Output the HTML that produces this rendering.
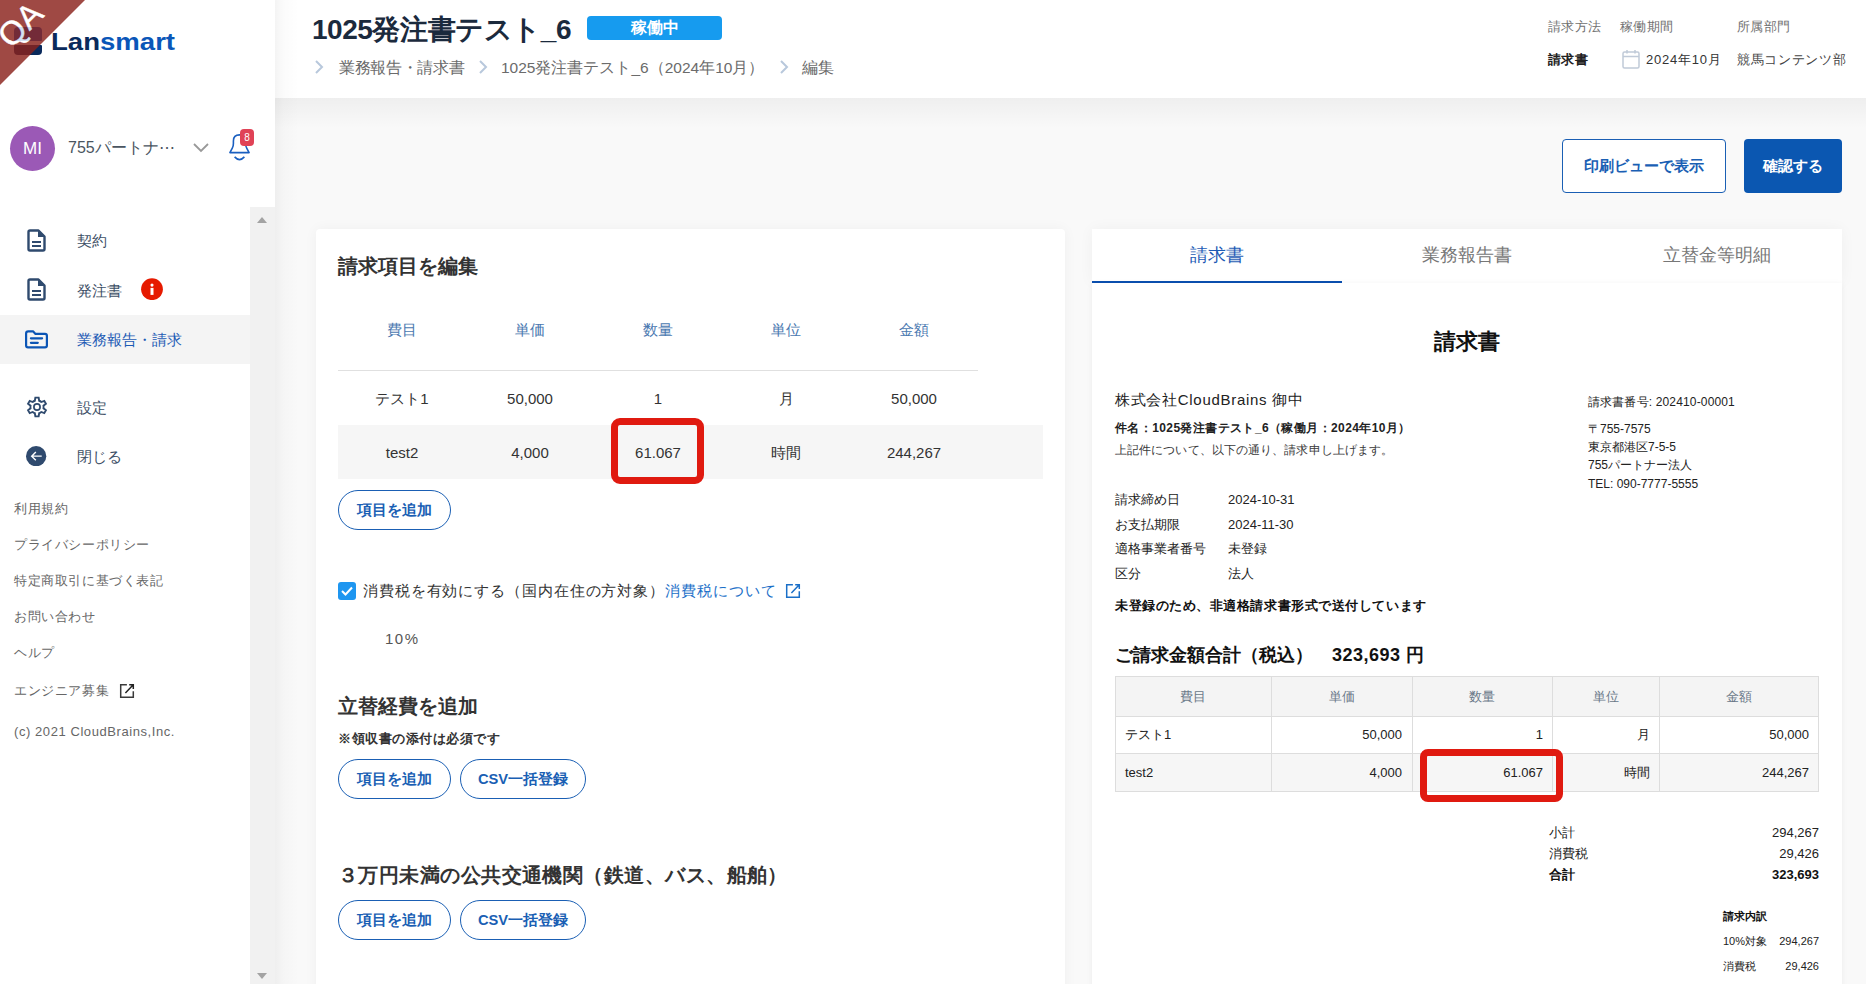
<!DOCTYPE html>
<html><head><meta charset="utf-8">
<style>
*{box-sizing:border-box;margin:0;padding:0}
html,body{width:1866px;height:984px;overflow:hidden;background:#f9f9f9;font-family:"Liberation Sans",sans-serif;color:#333}
.a{position:absolute;white-space:nowrap}
#side{position:absolute;left:0;top:0;width:275px;height:984px;background:#fff;z-index:2}
#sshadow{position:absolute;left:275px;top:0;width:24px;height:984px;background:linear-gradient(90deg,rgba(0,0,0,.045),rgba(0,0,0,.015) 35%,rgba(0,0,0,0));z-index:2}
#hshadow{position:absolute;left:275px;top:98px;width:1591px;height:30px;background:linear-gradient(rgba(0,0,0,.045),rgba(0,0,0,0))}
#hdr{position:absolute;left:275px;top:0;width:1591px;height:98px;background:#fff}
.navt{font-size:15px;color:#3d4f66;line-height:20px}
.foot{font-size:13px;color:#666;line-height:18px;left:14px;margin-top:1px;letter-spacing:.6px}
.btn-o{position:absolute;border:1px solid #1a5fb4;border-radius:20px;background:#fff;color:#1a5fb4;font-weight:bold;font-size:14.7px;text-align:center;line-height:39.5px;height:40px}
.th{font-size:15px;color:#4a78b0;line-height:20px;text-align:center;width:128px}
.td{font-size:15px;color:#333;line-height:20px;text-align:center;width:128px}
.doc{font-size:12px;color:#222;line-height:16px}
.dt{position:absolute;border-collapse:collapse;font-size:13px;color:#333}
</style></head><body>

<!-- SIDEBAR -->
<div id="side">
  <!-- logo -->
  <div class="a" style="left:14px;top:27px;width:28px;height:13.5px;border-radius:4px 4px 1px 1px;background:#0a56b8"></div><div class="a" style="left:14px;top:45px;width:28px;height:9.5px;border-radius:1px 1px 4px 4px;background:#0a2a5c"></div>
  <div class="a" style="left:51px;top:27px;font-size:24px;font-weight:bold;line-height:30px;color:#0a2a5c;transform:scaleX(1.148);transform-origin:0 0">Lan<span style="color:#0a56b8">smart</span></div>

  <!-- user -->
  <div class="a" style="left:10px;top:126px;width:45px;height:45px;border-radius:50%;background:#9b59b6;color:#fff;font-size:17px;line-height:45px;text-align:center">MI</div>
  <div class="a" style="left:68px;top:138px;font-size:16px;color:#4a5560;line-height:20px">755パートナ⋯</div>
  <svg class="a" style="left:192px;top:142px" width="18" height="12" viewBox="0 0 18 12"><path d="M2 2 L9 9 L16 2" fill="none" stroke="#999" stroke-width="1.8"/></svg>
  <svg class="a" style="left:226px;top:130px" width="30" height="34" viewBox="0 0 30 34"><path d="M3.9 22.6 L6.3 18.2 Q7.4 16.3 7.4 13.5 V11 Q7.4 4.9 13.5 4.9 Q19.6 4.9 19.6 11 V13.5 Q19.6 16.3 20.7 18.2 L23.1 22.6 Z" fill="none" stroke="#1a5fc0" stroke-width="1.6" stroke-linejoin="round"/><path d="M8.6 26.9 Q13.5 32.3 18.4 26.9" fill="none" stroke="#1a5fc0" stroke-width="1.6"/></svg>
  <div class="a" style="left:240px;top:128.7px;width:14px;height:17px;border-radius:4px;background:#e04256;color:#fff;font-size:10px;line-height:17px;text-align:center">8</div>

  <!-- nav -->
  <svg class="a" style="left:27px;top:229px" width="19" height="23" viewBox="0 0 19 23"><path d="M3 1.5 H11.5 L17.5 7.5 V20 Q17.5 21.5 16 21.5 H3 Q1.5 21.5 1.5 20 V3 Q1.5 1.5 3 1.5 Z" fill="none" stroke="#2f4a6e" stroke-width="2.4" stroke-linejoin="round"/><path d="M11 1.5 V8 H17.5 Z" fill="#2f4a6e"/><path d="M5 13 H14 M5 17 H14" stroke="#2f4a6e" stroke-width="2"/></svg>
  <div class="a navt" style="left:77px;top:231px">契約</div>
  <svg class="a" style="left:27px;top:278px" width="19" height="23" viewBox="0 0 19 23"><path d="M3 1.5 H11.5 L17.5 7.5 V20 Q17.5 21.5 16 21.5 H3 Q1.5 21.5 1.5 20 V3 Q1.5 1.5 3 1.5 Z" fill="none" stroke="#2f4a6e" stroke-width="2.4" stroke-linejoin="round"/><path d="M11 1.5 V8 H17.5 Z" fill="#2f4a6e"/><path d="M5 13 H14 M5 17 H14" stroke="#2f4a6e" stroke-width="2"/></svg>
  <div class="a navt" style="left:77px;top:281px">発注書</div>
  <svg class="a" style="left:141.4px;top:278.2px" width="22" height="22" viewBox="0 0 22 22"><circle cx="11" cy="11.2" r="10.9" fill="#e61a00"/><circle cx="11" cy="7.1" r="1.55" fill="#fff"/><rect x="9.5" y="9.9" width="3" height="7" fill="#fff"/></svg>

  <div class="a" style="left:0;top:315px;width:250px;height:49px;background:#f4f4f4"></div>
  <svg class="a" style="left:25px;top:330px" width="24" height="19" viewBox="0 0 24 19"><path d="M1.1 15.5 V3.4 Q1.1 1.3 3.2 1.3 H8 L10.5 3.9 H20 Q21.9 3.9 21.9 5.8 V15.5 Q21.9 17.4 20 17.4 H3 Q1.1 17.4 1.1 15.5 Z" fill="none" stroke="#0b55b5" stroke-width="2.2" stroke-linejoin="round"/><path d="M5.9 8.3 H17.1 M5.9 12.8 H12.8" stroke="#0b55b5" stroke-width="2.2" stroke-linecap="round"/></svg>
  <div class="a navt" style="left:77px;top:330px;color:#1d5bb5">業務報告・請求</div>

  <svg class="a" style="left:24.8px;top:394.9px" width="24" height="24" viewBox="0 0 24 24"><path d="M9.85 5.76L10.35 2.64L13.65 2.64L14.15 5.76A6.60 6.60 0 0 1 16.33 7.02L19.28 5.89L20.93 8.75L18.48 10.74A6.60 6.60 0 0 1 18.48 13.26L20.93 15.25L19.28 18.11L16.33 16.98A6.60 6.60 0 0 1 14.15 18.24L13.65 21.36L10.35 21.36L9.85 18.24A6.60 6.60 0 0 1 7.67 16.98L4.72 18.11L3.07 15.25L5.52 13.26A6.60 6.60 0 0 1 5.52 10.74L3.07 8.75L4.72 5.89L7.67 7.02A6.60 6.60 0 0 1 9.85 5.76Z" fill="none" stroke="#2f4a6e" stroke-width="1.9" stroke-linejoin="miter"/><circle cx="12" cy="12" r="3.1" fill="none" stroke="#2f4a6e" stroke-width="1.7"/></svg>
  <div class="a navt" style="left:77px;top:398px">設定</div>
  <svg class="a" style="left:26.4px;top:446px" width="20.3" height="20.3" viewBox="0 0 20 20"><circle cx="10" cy="10" r="10" fill="#2f4a6e"/><path d="M15.5 10 H5.8 M9.7 5.9 L5.6 10 L9.7 14.1" fill="none" stroke="#fff" stroke-width="1.4"/></svg>
  <div class="a navt" style="left:77px;top:447px">閉じる</div>

  <div class="a foot" style="top:499px">利用規約</div>
  <div class="a foot" style="top:535px">プライバシーポリシー</div>
  <div class="a foot" style="top:571px">特定商取引に基づく表記</div>
  <div class="a foot" style="top:607px">お問い合わせ</div>
  <div class="a foot" style="top:643px">ヘルプ</div>
  <div class="a foot" style="top:681px">エンジニア募集</div>
  <svg class="a" style="left:118px;top:682.3px" width="17" height="17" viewBox="0 0 17 17"><path d="M8.9 2.7 H2.7 V15.2 H15.3 V9.2" fill="none" stroke="#3a3a3a" stroke-width="1.5"/><path d="M11.2 2.7 H15.3 V6.9 M7.4 10.9 L15 3" fill="none" stroke="#222" stroke-width="1.5"/></svg>
  <div class="a foot" style="top:722px;letter-spacing:.57px">(c) 2021 CloudBrains,Inc.</div>

  <!-- scrollbar -->
  <div class="a" style="left:250px;top:207px;width:25px;height:777px;background:#f1f1f1"></div>
  <div class="a" style="left:257px;top:217px;width:0;height:0;border-left:5.6px solid transparent;border-right:5.6px solid transparent;border-bottom:6px solid #a3a3a3"></div>
  <div class="a" style="left:257px;top:973px;width:0;height:0;border-left:5.6px solid transparent;border-right:5.6px solid transparent;border-top:6px solid #a3a3a3"></div>
</div>

<!-- QA ribbon -->
<div class="a" style="left:0;top:0;width:100px;height:100px;opacity:.82;z-index:3">
<div class="a" style="left:0;top:0;width:0;height:0;border-top:85px solid #8b221c;border-right:85px solid transparent"></div>
<div class="a" style="left:-15px;top:6.5px;width:70px;transform:rotate(-45deg);color:#fff;font-size:33px;line-height:35px;text-align:center;-webkit-text-stroke:.4px #fff">QA</div>
</div>
<!-- HEADER -->
<div id="hdr"></div><div id="hshadow"></div><div id="sshadow"></div>
<div class="a" style="left:312px;top:12.5px;font-size:28px;font-weight:bold;color:#1b2a3d;line-height:34px;letter-spacing:-.45px">1025発注書テスト_6</div>
<div class="a" style="left:587px;top:16px;width:135px;height:24px;border-radius:4px;background:#169bef;color:#fff;font-weight:bold;font-size:16px;line-height:24px;text-align:center">稼働中</div>
<svg class="a" style="left:314px;top:59px" width="12" height="16" viewBox="0 0 12 16"><path d="M2 2 L8 8 L2 14" fill="none" stroke="#b8c8dc" stroke-width="2"/></svg>
<div class="a" style="left:339px;top:57.8px;font-size:15.5px;color:#6b6b6b;line-height:20px;letter-spacing:-.35px">業務報告・請求書</div>
<svg class="a" style="left:478px;top:59px" width="12" height="16" viewBox="0 0 12 16"><path d="M2 2 L8 8 L2 14" fill="none" stroke="#b8c8dc" stroke-width="2"/></svg>
<div class="a" style="left:501px;top:57.8px;font-size:15.5px;color:#6b6b6b;line-height:20px">1025発注書テスト_6（2024年10月）</div>
<svg class="a" style="left:779px;top:59px" width="12" height="16" viewBox="0 0 12 16"><path d="M2 2 L8 8 L2 14" fill="none" stroke="#b8c8dc" stroke-width="2"/></svg>
<div class="a" style="left:802px;top:57.8px;font-size:15.5px;color:#6b6b6b;line-height:20px">編集</div>

<div class="a" style="left:1548px;top:18px;font-size:13px;color:#707070;line-height:18px;letter-spacing:.3px">請求方法</div>
<div class="a" style="left:1620px;top:18px;font-size:13px;color:#707070;line-height:18px;letter-spacing:.3px">稼働期間</div>
<div class="a" style="left:1737px;top:18px;font-size:13px;color:#707070;line-height:18px;letter-spacing:.3px">所属部門</div>
<div class="a" style="left:1548px;top:51px;font-size:13px;letter-spacing:.3px;font-weight:bold;color:#222;line-height:18px">請求書</div>
<svg class="a" style="left:1622px;top:49px" width="18" height="20" viewBox="0 0 18 20"><rect x="1" y="3" width="16" height="16" rx="1.5" fill="none" stroke="#c0cad8" stroke-width="1.5"/><path d="M1 7.5 H17 M5 1 V4.5 M13 1 V4.5" stroke="#c0cad8" stroke-width="1.5"/></svg>
<div class="a" style="left:1646px;top:51px;font-size:13px;letter-spacing:.75px;color:#333;line-height:18px">2024年10月</div>
<div class="a" style="left:1737px;top:51px;font-size:13px;letter-spacing:.65px;color:#444;line-height:18px">競馬コンテンツ部</div>

<!-- action buttons -->
<div class="a" style="left:1562px;top:139px;width:164px;height:54px;border:1px solid #1a5fb4;border-radius:4px;background:#fff;color:#1a5fb4;font-weight:bold;font-size:15.3px;line-height:52px;text-align:center">印刷ビューで表示</div>
<div class="a" style="left:1744px;top:139px;width:98px;height:54px;border-radius:4px;background:#0b57b1;color:#fff;font-weight:bold;font-size:15px;line-height:54px;text-align:center">確認する</div>

<!-- LEFT CARD -->
<div class="a" style="left:316px;top:229px;width:749px;height:780px;background:#fff;border-radius:4px;box-shadow:0 0 14px rgba(0,0,0,.045)"></div>
<div class="a" style="left:338px;top:254px;font-size:20px;font-weight:bold;color:#333;line-height:24px">請求項目を編集</div>
<div class="a th" style="left:338px;top:320px">費目</div>
<div class="a th" style="left:466px;top:320px">単価</div>
<div class="a th" style="left:594px;top:320px">数量</div>
<div class="a th" style="left:722px;top:320px">単位</div>
<div class="a th" style="left:850px;top:320px">金額</div>
<div class="a" style="left:338px;top:370px;width:640px;height:1px;background:#e0e0e0"></div>
<div class="a td" style="left:338px;top:389px">テスト1</div>
<div class="a td" style="left:466px;top:389px">50,000</div>
<div class="a td" style="left:594px;top:389px">1</div>
<div class="a td" style="left:722px;top:389px">月</div>
<div class="a td" style="left:850px;top:389px">50,000</div>
<div class="a" style="left:338px;top:425px;width:705px;height:54px;background:#f6f6f6"></div>
<div class="a td" style="left:338px;top:443px">test2</div>
<div class="a td" style="left:466px;top:443px">4,000</div>
<div class="a td" style="left:594px;top:443px">61.067</div>
<div class="a td" style="left:722px;top:443px">時間</div>
<div class="a td" style="left:850px;top:443px">244,267</div>
<div class="a" style="left:611px;top:418px;width:93px;height:66px;border:7.5px solid #e01a10;border-radius:9px"></div>

<div class="btn-o" style="left:338px;top:490px;width:113px">項目を追加</div>

<div class="a" style="left:338px;top:582px;width:18px;height:18px;border-radius:3px;background:#1e96f0"></div>
<svg class="a" style="left:338px;top:582px" width="18" height="18" viewBox="0 0 18 18"><path d="M4 9 L7.5 12.5 L14 5.5" fill="none" stroke="#fff" stroke-width="2"/></svg>
<div class="a" style="left:363px;top:581px;font-size:15px;color:#333;line-height:20px;letter-spacing:.9px">消費税を有効にする（国内在住の方対象）<span style="color:#1a6fc8">消費税について</span></div>
<svg class="a" style="left:784px;top:582px" width="17" height="17" viewBox="0 0 17 17"><path d="M8.9 2.7 H2.7 V15.2 H15.3 V9.2" fill="none" stroke="#1a6fc8" stroke-width="1.5"/><path d="M11.2 2.7 H15.3 V6.9 M7.4 10.9 L15 3" fill="none" stroke="#1a6fc8" stroke-width="1.5"/></svg>
<div class="a" style="left:385px;top:629px;font-size:15px;color:#555;line-height:20px;letter-spacing:1.5px">10%</div>

<div class="a" style="left:338px;top:694px;font-size:20px;font-weight:bold;color:#333;line-height:24px">立替経費を追加</div>
<div class="a" style="left:338px;top:730px;font-size:13px;font-weight:bold;color:#333;line-height:18px;letter-spacing:.5px">※領収書の添付は必須です</div>
<div class="btn-o" style="left:338px;top:759px;width:113px">項目を追加</div>
<div class="btn-o" style="left:460px;top:759px;width:126px">CSV一括登録</div>

<div class="a" style="left:338px;top:863px;font-size:20px;font-weight:bold;color:#333;line-height:24px;letter-spacing:.45px">３万円未満の公共交通機関（鉄道、バス、船舶）</div>
<div class="btn-o" style="left:338px;top:900px;width:113px">項目を追加</div>
<div class="btn-o" style="left:460px;top:900px;width:126px">CSV一括登録</div>

<!-- RIGHT PANEL -->
<div class="a" style="left:1092px;top:229px;width:750px;height:54px;background:#fff;box-shadow:0 0 14px rgba(0,0,0,.045)"></div>
<div class="a" style="left:1092px;top:281px;width:250px;height:2.3px;background:#0b4fb0"></div>
<div class="a" style="left:1092px;top:244px;width:250px;text-align:center;font-size:18px;color:#1d5bb5;line-height:22px">請求書</div>
<div class="a" style="left:1342px;top:244px;width:250px;text-align:center;font-size:18px;color:#777;line-height:22px">業務報告書</div>
<div class="a" style="left:1592px;top:244px;width:250px;text-align:center;font-size:18px;color:#777;line-height:22px">立替金等明細</div>
<div class="a" style="left:1092px;top:283px;width:750px;height:710px;background:#fff;box-shadow:0 1px 6px rgba(0,0,0,.06)"></div>

<div class="a" style="left:1092px;top:328px;width:750px;text-align:center;font-size:22px;font-weight:bold;color:#111;line-height:28px">請求書</div>
<div class="a" style="left:1115px;top:390px;font-size:15px;color:#222;line-height:20px;letter-spacing:.7px">株式会社CloudBrains 御中</div>
<div class="a doc" style="left:1115px;top:420px;font-weight:bold;letter-spacing:.4px">件名：1025発注書テスト_6（稼働月：2024年10月）</div>
<div class="a doc" style="left:1115px;top:442px;color:#3a3a3a;letter-spacing:.1px">上記件について、以下の通り、請求申し上げます。</div>
<div class="a doc" style="left:1588px;top:394px;letter-spacing:.15px">請求書番号: 202410-00001</div>
<div class="a doc" style="left:1588px;top:421px">〒755-7575</div>
<div class="a doc" style="left:1588px;top:439px">東京都港区7-5-5</div>
<div class="a doc" style="left:1588px;top:457px">755パートナー法人</div>
<div class="a doc" style="left:1588px;top:476px">TEL: 090-7777-5555</div>

<div class="a doc" style="left:1115px;top:491px;font-size:13px;line-height:18px">請求締め日</div>
<div class="a doc" style="left:1228px;top:491px;font-size:13px;line-height:18px">2024-10-31</div>
<div class="a doc" style="left:1115px;top:516px;font-size:13px;line-height:18px">お支払期限</div>
<div class="a doc" style="left:1228px;top:516px;font-size:13px;line-height:18px">2024-11-30</div>
<div class="a doc" style="left:1115px;top:540px;font-size:13px;line-height:18px">適格事業者番号</div>
<div class="a doc" style="left:1228px;top:540px;font-size:13px;line-height:18px">未登録</div>
<div class="a doc" style="left:1115px;top:565px;font-size:13px;line-height:18px">区分</div>
<div class="a doc" style="left:1228px;top:565px;font-size:13px;line-height:18px">法人</div>
<div class="a doc" style="left:1115px;top:597px;font-size:13px;line-height:18px;font-weight:bold;color:#111;letter-spacing:.55px">未登録のため、非適格請求書形式で送付しています</div>

<div class="a" style="left:1115px;top:643px;font-size:18px;font-weight:bold;color:#111;line-height:24px">ご請求金額合計（税込）<span style="margin-left:19px;letter-spacing:.5px">323,693 円</span></div>

<div class="a" style="left:1115px;top:676px;width:704px;height:116px;border:1px solid #ddd;background:#fff"></div>
<div class="a" style="left:1116px;top:677px;width:702px;height:39.5px;background:#f4f4f4;border-bottom:1px solid #ddd"></div>
<div class="a" style="left:1116px;top:753px;width:702px;height:38px;background:#f6f6f6;border-top:1px solid #ddd"></div>
<div class="a" style="left:1271px;top:677px;width:1px;height:114px;background:#ddd"></div>
<div class="a" style="left:1412px;top:677px;width:1px;height:114px;background:#ddd"></div>
<div class="a" style="left:1552px;top:677px;width:1px;height:114px;background:#ddd"></div>
<div class="a" style="left:1659px;top:677px;width:1px;height:114px;background:#ddd"></div>

<div class="a doc" style="left:1115px;top:688px;width:156px;text-align:center;font-size:13px;line-height:18px;color:#6a7888">費目</div>
<div class="a doc" style="left:1271px;top:688px;width:141px;text-align:center;font-size:13px;line-height:18px;color:#6a7888">単価</div>
<div class="a doc" style="left:1412px;top:688px;width:140px;text-align:center;font-size:13px;line-height:18px;color:#6a7888">数量</div>
<div class="a doc" style="left:1552px;top:688px;width:107px;text-align:center;font-size:13px;line-height:18px;color:#6a7888">単位</div>
<div class="a doc" style="left:1659px;top:688px;width:160px;text-align:center;font-size:13px;line-height:18px;color:#6a7888">金額</div>

<div class="a doc" style="left:1125px;top:726px;font-size:13px;line-height:18px">テスト1</div>
<div class="a doc" style="left:1271px;top:726px;width:131px;text-align:right;font-size:13px;line-height:18px">50,000</div>
<div class="a doc" style="left:1412px;top:726px;width:131px;text-align:right;font-size:13px;line-height:18px">1</div>
<div class="a doc" style="left:1552px;top:726px;width:98px;text-align:right;font-size:13px;line-height:18px">月</div>
<div class="a doc" style="left:1659px;top:726px;width:150px;text-align:right;font-size:13px;line-height:18px">50,000</div>

<div class="a doc" style="left:1125px;top:764px;font-size:13px;line-height:18px">test2</div>
<div class="a doc" style="left:1271px;top:764px;width:131px;text-align:right;font-size:13px;line-height:18px">4,000</div>
<div class="a doc" style="left:1412px;top:764px;width:131px;text-align:right;font-size:13px;line-height:18px">61.067</div>
<div class="a doc" style="left:1552px;top:764px;width:98px;text-align:right;font-size:13px;line-height:18px">時間</div>
<div class="a doc" style="left:1659px;top:764px;width:150px;text-align:right;font-size:13px;line-height:18px">244,267</div>
<div class="a" style="left:1420px;top:749px;width:143px;height:53px;border:7px solid #e01a10;border-radius:8px"></div>

<div class="a doc" style="left:1549px;top:824px;font-size:13px;line-height:18px">小計</div>
<div class="a doc" style="left:1649px;top:824px;width:170px;text-align:right;font-size:13px;line-height:18px">294,267</div>
<div class="a doc" style="left:1549px;top:845px;font-size:13px;line-height:18px">消費税</div>
<div class="a doc" style="left:1649px;top:845px;width:170px;text-align:right;font-size:13px;line-height:18px">29,426</div>
<div class="a doc" style="left:1549px;top:866px;font-size:13px;line-height:18px;font-weight:bold;color:#111">合計</div>
<div class="a doc" style="left:1649px;top:866px;width:170px;text-align:right;font-size:13px;line-height:18px;font-weight:bold;color:#111">323,693</div>

<div class="a doc" style="left:1723px;top:909px;font-size:11px;line-height:15px;font-weight:bold;color:#111">請求内訳</div>
<div class="a doc" style="left:1723px;top:934px;font-size:11px;line-height:15px">10%対象</div>
<div class="a doc" style="left:1749px;top:934px;width:70px;text-align:right;font-size:11px;line-height:15px">294,267</div>
<div class="a doc" style="left:1723px;top:959px;font-size:11px;line-height:15px">消費税</div>
<div class="a doc" style="left:1749px;top:959px;width:70px;text-align:right;font-size:11px;line-height:15px">29,426</div>

</body></html>
